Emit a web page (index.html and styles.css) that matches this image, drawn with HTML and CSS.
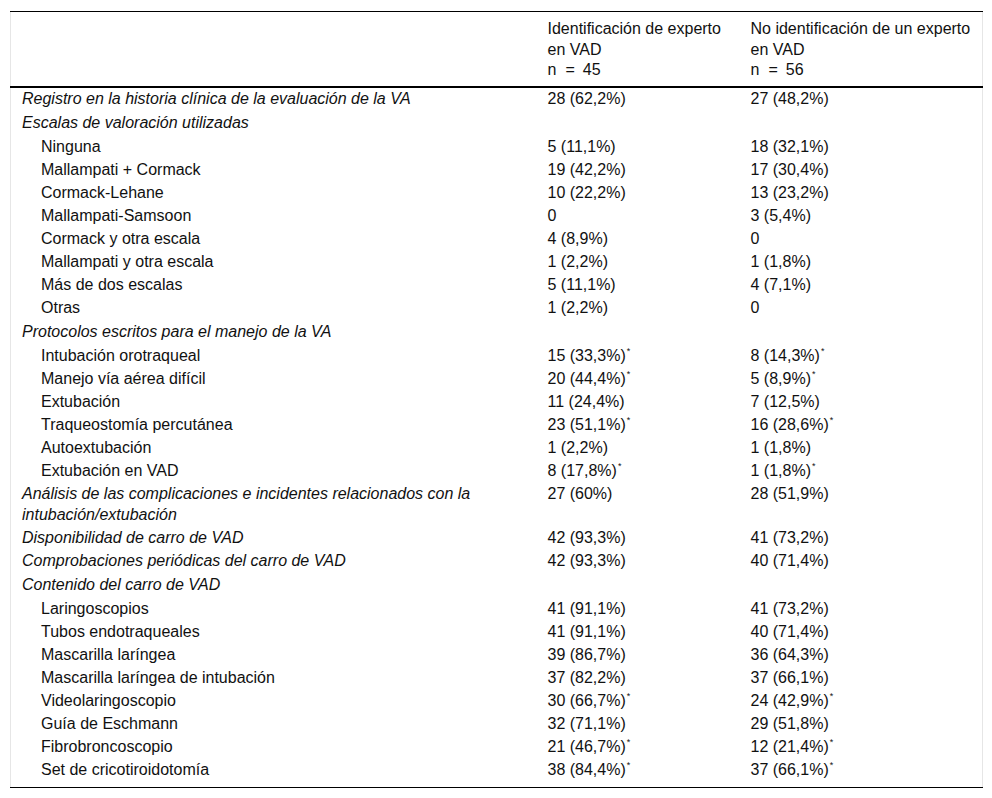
FILE: index.html
```html
<!DOCTYPE html>
<html lang="es">
<head>
<meta charset="utf-8">
<title>Tabla</title>
<link rel="stylesheet" href="styles.css">
</head>
<body>
<div class="wrap">
<table class="tbl">
<colgroup><col class="c1"><col class="c2"><col class="c3"></colgroup>
<thead>
<tr>
<th></th>
<th>Identificación de experto<br>en VAD<br><span class="n">n<span class="eq">=</span>45</span></th>
<th>No identificación de un experto<br>en VAD<br><span class="n">n<span class="eq">=</span>56</span></th>
</tr>
</thead>
<tbody>
<tr><td class="cat">Registro en la historia clínica de la evaluación de la VA</td><td>28 (62,2%)</td><td>27 (48,2%)</td></tr>
<tr class="group"><td class="cat">Escalas de valoración utilizadas</td><td></td><td></td></tr>
<tr><td class="sub">Ninguna</td><td>5 (11,1%)</td><td>18 (32,1%)</td></tr>
<tr><td class="sub">Mallampati + Cormack</td><td>19 (42,2%)</td><td>17 (30,4%)</td></tr>
<tr><td class="sub">Cormack-Lehane</td><td>10 (22,2%)</td><td>13 (23,2%)</td></tr>
<tr><td class="sub">Mallampati-Samsoon</td><td>0</td><td>3 (5,4%)</td></tr>
<tr><td class="sub">Cormack y otra escala</td><td>4 (8,9%)</td><td>0</td></tr>
<tr><td class="sub">Mallampati y otra escala</td><td>1 (2,2%)</td><td>1 (1,8%)</td></tr>
<tr><td class="sub">Más de dos escalas</td><td>5 (11,1%)</td><td>4 (7,1%)</td></tr>
<tr><td class="sub">Otras</td><td>1 (2,2%)</td><td>0</td></tr>
<tr class="group"><td class="cat">Protocolos escritos para el manejo de la VA</td><td></td><td></td></tr>
<tr><td class="sub">Intubación orotraqueal</td><td>15 (33,3%)<sup>*</sup></td><td>8 (14,3%)<sup>*</sup></td></tr>
<tr><td class="sub">Manejo vía aérea difícil</td><td>20 (44,4%)<sup>*</sup></td><td>5 (8,9%)<sup>*</sup></td></tr>
<tr><td class="sub">Extubación</td><td>11 (24,4%)</td><td>7 (12,5%)</td></tr>
<tr><td class="sub">Traqueostomía percutánea</td><td>23 (51,1%)<sup>*</sup></td><td>16 (28,6%)<sup>*</sup></td></tr>
<tr><td class="sub">Autoextubación</td><td>1 (2,2%)</td><td>1 (1,8%)</td></tr>
<tr><td class="sub">Extubación en VAD</td><td>8 (17,8%)<sup>*</sup></td><td>1 (1,8%)<sup>*</sup></td></tr>
<tr><td class="cat">Análisis de las complicaciones e incidentes relacionados con la intubación/extubación</td><td>27 (60%)</td><td>28 (51,9%)</td></tr>
<tr><td class="cat">Disponibilidad de carro de VAD</td><td>42 (93,3%)</td><td>41 (73,2%)</td></tr>
<tr><td class="cat">Comprobaciones periódicas del carro de VAD</td><td>42 (93,3%)</td><td>40 (71,4%)</td></tr>
<tr class="group"><td class="cat">Contenido del carro de VAD</td><td></td><td></td></tr>
<tr><td class="sub">Laringoscopios</td><td>41 (91,1%)</td><td>41 (73,2%)</td></tr>
<tr><td class="sub">Tubos endotraqueales</td><td>41 (91,1%)</td><td>40 (71,4%)</td></tr>
<tr><td class="sub">Mascarilla laríngea</td><td>39 (86,7%)</td><td>36 (64,3%)</td></tr>
<tr><td class="sub">Mascarilla laríngea de intubación</td><td>37 (82,2%)</td><td>37 (66,1%)</td></tr>
<tr><td class="sub">Videolaringoscopio</td><td>30 (66,7%)<sup>*</sup></td><td>24 (42,9%)<sup>*</sup></td></tr>
<tr><td class="sub">Guía de Eschmann</td><td>32 (71,1%)</td><td>29 (51,8%)</td></tr>
<tr><td class="sub">Fibrobroncoscopio</td><td>21 (46,7%)<sup>*</sup></td><td>12 (21,4%)<sup>*</sup></td></tr>
<tr><td class="sub">Set de cricotiroidotomía</td><td>38 (84,4%)<sup>*</sup></td><td>37 (66,1%)<sup>*</sup></td></tr>
</tbody>
</table>
</div>
</body>
</html>
```

FILE: styles.css
```css
html, body {
  margin: 0;
  padding: 0;
  background: #fff;
}
body {
  font-family: "Liberation Sans", Arial, sans-serif;
  font-size: 16px;
  color: #111;
}
.wrap {
  padding: 11px 0 0 10px;
  width: 972px;
}
.tbl {
  width: 972px;
  border-collapse: collapse;
  table-layout: fixed;
  border-left: 1px solid #e6e6e6;
  border-right: 1px solid #e6e6e6;
}
.c1 { width: 526px; }
.c2 { width: 203px; }
.c3 { width: 243px; }
.tbl thead tr {
  border-top: 1px solid #000;
  border-bottom: 2px solid #000;
}
.tbl th {
  font-weight: normal;
  text-align: left;
  vertical-align: top;
  line-height: 20.5px;
  padding: 7px 2px 5px 11px;
}
.tbl td {
  line-height: 21px;
  padding: 1px 2px 1px 11px;
  vertical-align: top;
}
.tbl tr.group td {
  padding-top: 2px;
  padding-bottom: 2px;
}
.tbl tbody tr:first-child td {
  padding-top: 0;
}
.tbl tbody tr:last-child td {
  border-bottom: 1px solid #000;
  padding-bottom: 7px;
}
.tbl td.cat {
  font-style: italic;
  padding-right: 40px;
}
.tbl td.sub {
  padding-left: 30px;
}
.n {
  white-space: nowrap;
}
.eq {
  margin: 0 8px 0 9px;
}
sup {
  font-size: 9px;
  line-height: 0;
  vertical-align: 7px;
  margin-left: 1px;
}
```
